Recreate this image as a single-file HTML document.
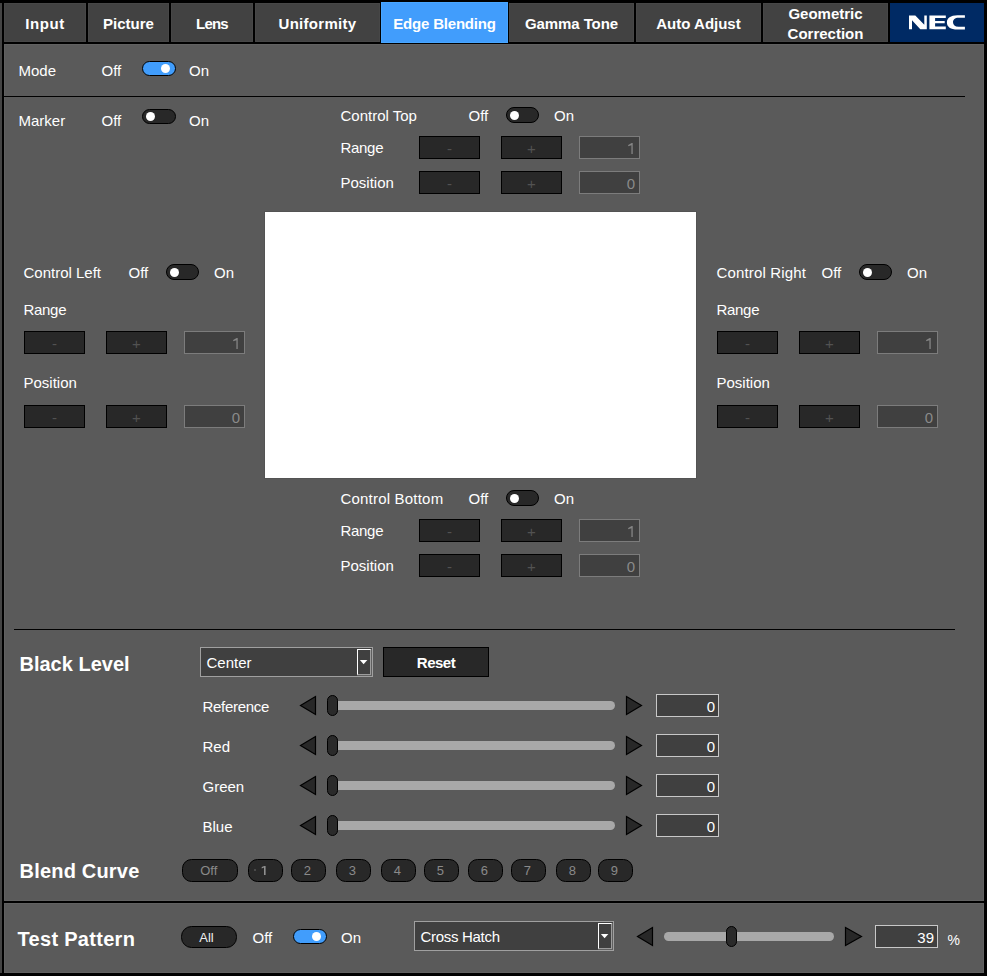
<!DOCTYPE html><html><head><meta charset="utf-8"><style>
html,body{margin:0;padding:0;width:987px;height:976px;overflow:hidden;background:#000}
body{position:relative;font-family:"Liberation Sans",sans-serif}
.t{position:absolute;white-space:nowrap;line-height:20px;font-family:"Liberation Sans",sans-serif}
</style></head><body>
<div style="position:absolute;left:0px;top:3px;width:2px;height:970px;background:#444"></div>
<div style="position:absolute;left:4px;top:3px;width:82px;height:39px;box-sizing:border-box;background:#424242;border:1px solid #474747"></div>
<div class="t" style="left:4px;top:14px;width:82px;text-align:center;font-size:15px;font-weight:700;color:#fff;letter-spacing:0.6px">Input</div>
<div style="position:absolute;left:88px;top:3px;width:81px;height:39px;box-sizing:border-box;background:#424242;border:1px solid #474747"></div>
<div class="t" style="left:88px;top:14px;width:81px;text-align:center;font-size:15px;font-weight:700;color:#fff;letter-spacing:0px">Picture</div>
<div style="position:absolute;left:171px;top:3px;width:82px;height:39px;box-sizing:border-box;background:#424242;border:1px solid #474747"></div>
<div class="t" style="left:171px;top:14px;width:82px;text-align:center;font-size:15px;font-weight:700;color:#fff;letter-spacing:-0.8px">Lens</div>
<div style="position:absolute;left:255px;top:3px;width:125px;height:39px;box-sizing:border-box;background:#424242;border:1px solid #474747"></div>
<div class="t" style="left:255px;top:14px;width:125px;text-align:center;font-size:15px;font-weight:700;color:#fff;letter-spacing:0.3px">Uniformity</div>
<div style="position:absolute;left:509px;top:3px;width:125px;height:39px;box-sizing:border-box;background:#424242;border:1px solid #474747"></div>
<div class="t" style="left:509px;top:14px;width:125px;text-align:center;font-size:15px;font-weight:700;color:#fff;letter-spacing:-0.1px">Gamma Tone</div>
<div style="position:absolute;left:636px;top:3px;width:125px;height:39px;box-sizing:border-box;background:#424242;border:1px solid #474747"></div>
<div class="t" style="left:636px;top:14px;width:125px;text-align:center;font-size:15px;font-weight:700;color:#fff;letter-spacing:0px">Auto Adjust</div>
<div style="position:absolute;left:763px;top:3px;width:125px;height:39px;box-sizing:border-box;background:#424242;border:1px solid #474747"></div>
<div style="position:absolute;left:381px;top:2px;width:127px;height:41px;box-sizing:border-box;background:#419dfc;border:1px solid #48a6ff"></div>
<div class="t" style="left:381px;top:14px;width:127px;text-align:center;font-size:15px;font-weight:700;color:#fff;letter-spacing:-0.2px">Edge Blending</div>
<div class="t" style="left:763px;top:4px;width:125px;text-align:center;font-size:15px;font-weight:700;color:#fff;">Geometric</div>
<div class="t" style="left:763px;top:24px;width:125px;text-align:center;font-size:15px;font-weight:700;color:#fff;">Correction</div>
<div style="position:absolute;left:890px;top:3px;width:94px;height:39px;background:#002a64"></div>
<svg style="position:absolute;left:0;top:0" width="987" height="976" viewBox="0 0 987 976">
<g fill="#fff">
<path d="M909 15.4 H915.3 L924.3 24.8 V15.4 H926.8 V29.3 H920.3 L912 20.3 V29.3 H909 Z"/>
<path d="M929.4 15.4 H945.8 V18 H935.1 V21.1 H944.7 V23.3 H935.1 V26.5 H945.8 V29.3 H929.4 Z"/>
<path d="M964.9 15.3 V17.7 H958.5 C955 17.7 953 19.6 953 22.2 C953 24.9 955 26.7 958.5 26.7 H964.9 V29.5 H957.5 C950.5 29.5 946.9 26.6 946.9 22.4 C946.9 18.2 950.5 15.3 957.5 15.3 Z"/>
</g></svg>
<div style="position:absolute;left:4px;top:44px;width:980px;height:857px;box-sizing:border-box;background:#5a5a5a;border:1px solid #616161"></div>
<div style="position:absolute;left:4px;top:903px;width:980px;height:70px;box-sizing:border-box;background:#5a5a5a;border:1px solid #616161"></div>
<div style="position:absolute;left:4px;top:96px;width:961px;height:1px;background:#000"></div>
<div style="position:absolute;left:14px;top:629px;width:941px;height:1px;background:#000"></div>
<div class="t" style="left:18.5px;top:61px;font-size:15px;font-weight:400;color:#fff;">Mode</div>
<div class="t" style="left:101.5px;top:61px;font-size:15px;font-weight:400;color:#fff;">Off</div>
<div style="position:absolute;left:142px;top:61px;width:32px;height:13px;border:1px solid #000;border-radius:7.5px;background:#419dfc"></div>
<div style="position:absolute;left:160.9px;top:63.900000000000006px;width:9px;height:9px;border-radius:50%;background:#fff"></div>
<div class="t" style="left:189.0px;top:61px;font-size:15px;font-weight:400;color:#fff;">On</div>
<div class="t" style="left:18.5px;top:111px;font-size:15px;font-weight:400;color:#fff;">Marker</div>
<div class="t" style="left:101.5px;top:111px;font-size:15px;font-weight:400;color:#fff;">Off</div>
<div style="position:absolute;left:142px;top:109px;width:32px;height:13px;border:1px solid #000;border-radius:7.5px;background:#282828"></div>
<div style="position:absolute;left:146.0px;top:111.9px;width:9px;height:9px;border-radius:50%;background:#fff"></div>
<div class="t" style="left:189.0px;top:111px;font-size:15px;font-weight:400;color:#fff;">On</div>
<div class="t" style="left:340.5px;top:106px;font-size:15px;font-weight:400;color:#fff;">Control Top</div>
<div class="t" style="left:468.5px;top:106px;font-size:15px;font-weight:400;color:#fff;">Off</div>
<div style="position:absolute;left:506px;top:107px;width:31px;height:14px;border:1px solid #000;border-radius:8.0px;background:#282828"></div>
<div style="position:absolute;left:510.0px;top:110.8px;width:9px;height:9px;border-radius:50%;background:#fff"></div>
<div class="t" style="left:554.0px;top:106px;font-size:15px;font-weight:400;color:#fff;">On</div>
<div class="t" style="left:340.5px;top:138px;font-size:15px;font-weight:400;color:#fff;letter-spacing:-0.3px">Range</div>
<div style="position:absolute;left:419px;top:136px;width:61px;height:23px;box-sizing:border-box;border:1px solid #000;background:#282828"></div>
<div class="t" style="left:419px;top:139px;width:61px;text-align:center;font-size:15px;font-weight:400;color:#525252;">-</div>
<div style="position:absolute;left:501px;top:136px;width:61px;height:23px;box-sizing:border-box;border:1px solid #000;background:#282828"></div>
<div class="t" style="left:501px;top:139px;width:61px;text-align:center;font-size:15px;font-weight:400;color:#525252;">+</div>
<div style="position:absolute;left:579px;top:136px;width:61px;height:23px;box-sizing:border-box;border:1px solid #7c7c7c;background:#404040"></div>
<svg style="position:absolute;left:0;top:0;overflow:visible" width="1" height="1"><path d="M632.6999999999999 143 V154 H631.4 V145.16 L628.1999999999999 146.3 V144.9 L631.6999999999999 143 Z" fill="#858585"/></svg>
<div class="t" style="left:340.5px;top:173px;font-size:15px;font-weight:400;color:#fff;">Position</div>
<div style="position:absolute;left:419px;top:171px;width:61px;height:23px;box-sizing:border-box;border:1px solid #000;background:#282828"></div>
<div class="t" style="left:419px;top:174px;width:61px;text-align:center;font-size:15px;font-weight:400;color:#525252;">-</div>
<div style="position:absolute;left:501px;top:171px;width:61px;height:23px;box-sizing:border-box;border:1px solid #000;background:#282828"></div>
<div class="t" style="left:501px;top:174px;width:61px;text-align:center;font-size:15px;font-weight:400;color:#525252;">+</div>
<div style="position:absolute;left:579px;top:171px;width:61px;height:23px;box-sizing:border-box;border:1px solid #7c7c7c;background:#404040"></div>
<div class="t" style="left:435px;top:174px;width:200px;text-align:right;font-size:15px;font-weight:400;color:#8a8a8a">0</div>
<div class="t" style="left:23.5px;top:263px;font-size:15px;font-weight:400;color:#fff;">Control Left</div>
<div class="t" style="left:128.5px;top:263px;font-size:15px;font-weight:400;color:#fff;">Off</div>
<div style="position:absolute;left:166px;top:264px;width:31px;height:14px;border:1px solid #000;border-radius:8.0px;background:#282828"></div>
<div style="position:absolute;left:170.0px;top:267.8px;width:9px;height:9px;border-radius:50%;background:#fff"></div>
<div class="t" style="left:214.0px;top:263px;font-size:15px;font-weight:400;color:#fff;">On</div>
<div class="t" style="left:23.5px;top:300px;font-size:15px;font-weight:400;color:#fff;letter-spacing:-0.3px">Range</div>
<div style="position:absolute;left:24px;top:331px;width:61px;height:23px;box-sizing:border-box;border:1px solid #000;background:#282828"></div>
<div class="t" style="left:24px;top:334px;width:61px;text-align:center;font-size:15px;font-weight:400;color:#525252;">-</div>
<div style="position:absolute;left:106px;top:331px;width:61px;height:23px;box-sizing:border-box;border:1px solid #000;background:#282828"></div>
<div class="t" style="left:106px;top:334px;width:61px;text-align:center;font-size:15px;font-weight:400;color:#525252;">+</div>
<div style="position:absolute;left:184px;top:331px;width:61px;height:23px;box-sizing:border-box;border:1px solid #7c7c7c;background:#404040"></div>
<svg style="position:absolute;left:0;top:0;overflow:visible" width="1" height="1"><path d="M237.70000000000002 338 V349 H236.4 V340.16 L233.20000000000002 341.29999999999995 V339.9 L236.70000000000002 338 Z" fill="#858585"/></svg>
<div class="t" style="left:23.5px;top:373px;font-size:15px;font-weight:400;color:#fff;">Position</div>
<div style="position:absolute;left:24px;top:405px;width:61px;height:23px;box-sizing:border-box;border:1px solid #000;background:#282828"></div>
<div class="t" style="left:24px;top:408px;width:61px;text-align:center;font-size:15px;font-weight:400;color:#525252;">-</div>
<div style="position:absolute;left:106px;top:405px;width:61px;height:23px;box-sizing:border-box;border:1px solid #000;background:#282828"></div>
<div class="t" style="left:106px;top:408px;width:61px;text-align:center;font-size:15px;font-weight:400;color:#525252;">+</div>
<div style="position:absolute;left:184px;top:405px;width:61px;height:23px;box-sizing:border-box;border:1px solid #7c7c7c;background:#404040"></div>
<div class="t" style="left:40px;top:408px;width:200px;text-align:right;font-size:15px;font-weight:400;color:#8a8a8a">0</div>
<div class="t" style="left:716.5px;top:263px;font-size:15px;font-weight:400;color:#fff;letter-spacing:0.15px">Control Right</div>
<div class="t" style="left:821.5px;top:263px;font-size:15px;font-weight:400;color:#fff;">Off</div>
<div style="position:absolute;left:859px;top:264px;width:31px;height:14px;border:1px solid #000;border-radius:8.0px;background:#282828"></div>
<div style="position:absolute;left:863.0px;top:267.8px;width:9px;height:9px;border-radius:50%;background:#fff"></div>
<div class="t" style="left:907.0px;top:263px;font-size:15px;font-weight:400;color:#fff;">On</div>
<div class="t" style="left:716.5px;top:300px;font-size:15px;font-weight:400;color:#fff;letter-spacing:-0.3px">Range</div>
<div style="position:absolute;left:717px;top:331px;width:61px;height:23px;box-sizing:border-box;border:1px solid #000;background:#282828"></div>
<div class="t" style="left:717px;top:334px;width:61px;text-align:center;font-size:15px;font-weight:400;color:#525252;">-</div>
<div style="position:absolute;left:799px;top:331px;width:61px;height:23px;box-sizing:border-box;border:1px solid #000;background:#282828"></div>
<div class="t" style="left:799px;top:334px;width:61px;text-align:center;font-size:15px;font-weight:400;color:#525252;">+</div>
<div style="position:absolute;left:877px;top:331px;width:61px;height:23px;box-sizing:border-box;border:1px solid #7c7c7c;background:#404040"></div>
<svg style="position:absolute;left:0;top:0;overflow:visible" width="1" height="1"><path d="M930.6999999999999 338 V349 H929.4 V340.16 L926.1999999999999 341.29999999999995 V339.9 L929.6999999999999 338 Z" fill="#858585"/></svg>
<div class="t" style="left:716.5px;top:373px;font-size:15px;font-weight:400;color:#fff;">Position</div>
<div style="position:absolute;left:717px;top:405px;width:61px;height:23px;box-sizing:border-box;border:1px solid #000;background:#282828"></div>
<div class="t" style="left:717px;top:408px;width:61px;text-align:center;font-size:15px;font-weight:400;color:#525252;">-</div>
<div style="position:absolute;left:799px;top:405px;width:61px;height:23px;box-sizing:border-box;border:1px solid #000;background:#282828"></div>
<div class="t" style="left:799px;top:408px;width:61px;text-align:center;font-size:15px;font-weight:400;color:#525252;">+</div>
<div style="position:absolute;left:877px;top:405px;width:61px;height:23px;box-sizing:border-box;border:1px solid #7c7c7c;background:#404040"></div>
<div class="t" style="left:733px;top:408px;width:200px;text-align:right;font-size:15px;font-weight:400;color:#8a8a8a">0</div>
<div style="position:absolute;left:264px;top:211px;width:433px;height:268px;background:#535353"></div>
<div style="position:absolute;left:265px;top:212px;width:431px;height:266px;background:#fff"></div>
<div class="t" style="left:340.5px;top:489px;font-size:15px;font-weight:400;color:#fff;letter-spacing:0.2px">Control Bottom</div>
<div class="t" style="left:468.5px;top:489px;font-size:15px;font-weight:400;color:#fff;">Off</div>
<div style="position:absolute;left:506px;top:490px;width:31px;height:14px;border:1px solid #000;border-radius:8.0px;background:#282828"></div>
<div style="position:absolute;left:510.0px;top:493.8px;width:9px;height:9px;border-radius:50%;background:#fff"></div>
<div class="t" style="left:554.0px;top:489px;font-size:15px;font-weight:400;color:#fff;">On</div>
<div class="t" style="left:340.5px;top:521px;font-size:15px;font-weight:400;color:#fff;letter-spacing:-0.3px">Range</div>
<div style="position:absolute;left:419px;top:519px;width:61px;height:23px;box-sizing:border-box;border:1px solid #000;background:#282828"></div>
<div class="t" style="left:419px;top:522px;width:61px;text-align:center;font-size:15px;font-weight:400;color:#525252;">-</div>
<div style="position:absolute;left:501px;top:519px;width:61px;height:23px;box-sizing:border-box;border:1px solid #000;background:#282828"></div>
<div class="t" style="left:501px;top:522px;width:61px;text-align:center;font-size:15px;font-weight:400;color:#525252;">+</div>
<div style="position:absolute;left:579px;top:519px;width:61px;height:23px;box-sizing:border-box;border:1px solid #7c7c7c;background:#404040"></div>
<svg style="position:absolute;left:0;top:0;overflow:visible" width="1" height="1"><path d="M632.6999999999999 526 V537 H631.4 V528.16 L628.1999999999999 529.3 V527.9 L631.6999999999999 526 Z" fill="#858585"/></svg>
<div class="t" style="left:340.5px;top:556px;font-size:15px;font-weight:400;color:#fff;">Position</div>
<div style="position:absolute;left:419px;top:554px;width:61px;height:23px;box-sizing:border-box;border:1px solid #000;background:#282828"></div>
<div class="t" style="left:419px;top:557px;width:61px;text-align:center;font-size:15px;font-weight:400;color:#525252;">-</div>
<div style="position:absolute;left:501px;top:554px;width:61px;height:23px;box-sizing:border-box;border:1px solid #000;background:#282828"></div>
<div class="t" style="left:501px;top:557px;width:61px;text-align:center;font-size:15px;font-weight:400;color:#525252;">+</div>
<div style="position:absolute;left:579px;top:554px;width:61px;height:23px;box-sizing:border-box;border:1px solid #7c7c7c;background:#404040"></div>
<div class="t" style="left:435px;top:557px;width:200px;text-align:right;font-size:15px;font-weight:400;color:#8a8a8a">0</div>
<div class="t" style="left:19.5px;top:654px;font-size:20px;font-weight:700;color:#fff;">Black Level</div>
<div style="position:absolute;left:200px;top:647px;width:173px;height:30px;box-sizing:border-box;background:#404040;border:1px solid #a0a0a0"></div>
<div class="t" style="left:206.5px;top:653px;font-size:15px;font-weight:400;color:#fff;">Center</div>
<div style="position:absolute;left:357px;top:649px;width:15px;height:27px;background:#606060"></div>
<div style="position:absolute;left:357px;top:649px;width:14px;height:26px;box-sizing:border-box;background:#404040;border-style:solid;border-width:1px;border-color:#fff #9c9c9c #9c9c9c #fff"></div>
<svg style="position:absolute;left:0;top:0;overflow:visible" width="1" height="1"><path d="M359.85 660 H367.35 L363.6 664.2 Z" fill="#fff"/></svg>
<div style="position:absolute;left:383px;top:647px;width:106px;height:30px;box-sizing:border-box;background:#282828;border:1px solid #000"></div>
<div class="t" style="left:383px;top:653px;width:106px;text-align:center;font-size:15px;font-weight:700;color:#fff;letter-spacing:-0.5px">Reset</div>
<div class="t" style="left:202.5px;top:697px;font-size:15px;font-weight:400;color:#fff;letter-spacing:-0.3px">Reference</div>
<div style="position:absolute;left:330px;top:701px;width:285px;height:9px;border-radius:4.5px;background:#a8a8a8"></div>
<svg style="position:absolute;left:0;top:0;overflow:visible" width="1" height="1"><path d="M300.5 705.5 L315.5 696.5 V714.5 Z" fill="#282828" stroke="#000" stroke-width="1.2" stroke-linejoin="miter"/><path d="M641.5 705.5 L626.5 696.5 V714.5 Z" fill="#282828" stroke="#000" stroke-width="1.2"/></svg>
<div style="position:absolute;left:327px;top:695px;width:9px;height:19px;border:1px solid #000;border-radius:6px;background:#2a2a2a"></div>
<div style="position:absolute;left:656px;top:694px;width:63px;height:23px;box-sizing:border-box;background:#404040;border:1px solid #c8c8c8"></div>
<div class="t" style="left:515px;top:697px;width:200px;text-align:right;font-size:15px;font-weight:400;color:#fff">0</div>
<div class="t" style="left:202.5px;top:737px;font-size:15px;font-weight:400;color:#fff;">Red</div>
<div style="position:absolute;left:330px;top:741px;width:285px;height:9px;border-radius:4.5px;background:#a8a8a8"></div>
<svg style="position:absolute;left:0;top:0;overflow:visible" width="1" height="1"><path d="M300.5 745.5 L315.5 736.5 V754.5 Z" fill="#282828" stroke="#000" stroke-width="1.2" stroke-linejoin="miter"/><path d="M641.5 745.5 L626.5 736.5 V754.5 Z" fill="#282828" stroke="#000" stroke-width="1.2"/></svg>
<div style="position:absolute;left:327px;top:735px;width:9px;height:19px;border:1px solid #000;border-radius:6px;background:#2a2a2a"></div>
<div style="position:absolute;left:656px;top:734px;width:63px;height:23px;box-sizing:border-box;background:#404040;border:1px solid #c8c8c8"></div>
<div class="t" style="left:515px;top:737px;width:200px;text-align:right;font-size:15px;font-weight:400;color:#fff">0</div>
<div class="t" style="left:202.5px;top:777px;font-size:15px;font-weight:400;color:#fff;">Green</div>
<div style="position:absolute;left:330px;top:781px;width:285px;height:9px;border-radius:4.5px;background:#a8a8a8"></div>
<svg style="position:absolute;left:0;top:0;overflow:visible" width="1" height="1"><path d="M300.5 785.5 L315.5 776.5 V794.5 Z" fill="#282828" stroke="#000" stroke-width="1.2" stroke-linejoin="miter"/><path d="M641.5 785.5 L626.5 776.5 V794.5 Z" fill="#282828" stroke="#000" stroke-width="1.2"/></svg>
<div style="position:absolute;left:327px;top:775px;width:9px;height:19px;border:1px solid #000;border-radius:6px;background:#2a2a2a"></div>
<div style="position:absolute;left:656px;top:774px;width:63px;height:23px;box-sizing:border-box;background:#404040;border:1px solid #c8c8c8"></div>
<div class="t" style="left:515px;top:777px;width:200px;text-align:right;font-size:15px;font-weight:400;color:#fff">0</div>
<div class="t" style="left:202.5px;top:817px;font-size:15px;font-weight:400;color:#fff;">Blue</div>
<div style="position:absolute;left:330px;top:821px;width:285px;height:9px;border-radius:4.5px;background:#a8a8a8"></div>
<svg style="position:absolute;left:0;top:0;overflow:visible" width="1" height="1"><path d="M300.5 825.5 L315.5 816.5 V834.5 Z" fill="#282828" stroke="#000" stroke-width="1.2" stroke-linejoin="miter"/><path d="M641.5 825.5 L626.5 816.5 V834.5 Z" fill="#282828" stroke="#000" stroke-width="1.2"/></svg>
<div style="position:absolute;left:327px;top:815px;width:9px;height:19px;border:1px solid #000;border-radius:6px;background:#2a2a2a"></div>
<div style="position:absolute;left:656px;top:814px;width:63px;height:23px;box-sizing:border-box;background:#404040;border:1px solid #c8c8c8"></div>
<div class="t" style="left:515px;top:817px;width:200px;text-align:right;font-size:15px;font-weight:400;color:#fff">0</div>
<div class="t" style="left:19.5px;top:861px;font-size:20px;font-weight:700;color:#fff;letter-spacing:0.2px">Blend Curve</div>
<div style="position:absolute;left:182px;top:859px;width:56px;height:23px;box-sizing:border-box;background:#282828;border:1px solid #000;border-radius:9.5px"></div>
<div class="t" style="left:180.3px;top:861px;width:57.0px;text-align:center;font-size:13px;font-weight:400;color:#8a8a8a;">Off</div>
<div style="position:absolute;left:248px;top:859px;width:35px;height:23px;box-sizing:border-box;background:#282828;border:1px solid #000;border-radius:9.5px"></div>
<svg style="position:absolute;left:0;top:0;overflow:visible" width="1" height="1"><path d="M265.6 866 V875 H264 V867.44 L261.7 868.5 V867.1 L264.3 866 Z" fill="#909090"/></svg>
<div style="position:absolute;left:254px;top:869px;width:2px;height:2px;background:#555;border-radius:1px"></div>
<div style="position:absolute;left:291px;top:859px;width:35px;height:23px;box-sizing:border-box;background:#282828;border:1px solid #000;border-radius:9.5px"></div>
<div class="t" style="left:289.3px;top:861px;width:36.0px;text-align:center;font-size:13px;font-weight:400;color:#8a8a8a;">2</div>
<div style="position:absolute;left:336px;top:859px;width:35px;height:23px;box-sizing:border-box;background:#282828;border:1px solid #000;border-radius:9.5px"></div>
<div class="t" style="left:334.3px;top:861px;width:36.0px;text-align:center;font-size:13px;font-weight:400;color:#8a8a8a;">3</div>
<div style="position:absolute;left:381px;top:859px;width:35px;height:23px;box-sizing:border-box;background:#282828;border:1px solid #000;border-radius:9.5px"></div>
<div class="t" style="left:379.3px;top:861px;width:36.0px;text-align:center;font-size:13px;font-weight:400;color:#8a8a8a;">4</div>
<div style="position:absolute;left:424px;top:859px;width:35px;height:23px;box-sizing:border-box;background:#282828;border:1px solid #000;border-radius:9.5px"></div>
<div class="t" style="left:422.3px;top:861px;width:36.0px;text-align:center;font-size:13px;font-weight:400;color:#8a8a8a;">5</div>
<div style="position:absolute;left:468px;top:859px;width:35px;height:23px;box-sizing:border-box;background:#282828;border:1px solid #000;border-radius:9.5px"></div>
<div class="t" style="left:466.3px;top:861px;width:36.0px;text-align:center;font-size:13px;font-weight:400;color:#8a8a8a;">6</div>
<div style="position:absolute;left:511px;top:859px;width:35px;height:23px;box-sizing:border-box;background:#282828;border:1px solid #000;border-radius:9.5px"></div>
<div class="t" style="left:509.3px;top:861px;width:35.99999999999994px;text-align:center;font-size:13px;font-weight:400;color:#8a8a8a;">7</div>
<div style="position:absolute;left:556px;top:859px;width:35px;height:23px;box-sizing:border-box;background:#282828;border:1px solid #000;border-radius:9.5px"></div>
<div class="t" style="left:554.3px;top:861px;width:36.0px;text-align:center;font-size:13px;font-weight:400;color:#8a8a8a;">8</div>
<div style="position:absolute;left:598px;top:859px;width:35px;height:23px;box-sizing:border-box;background:#282828;border:1px solid #000;border-radius:9.5px"></div>
<div class="t" style="left:596.3px;top:861px;width:36.0px;text-align:center;font-size:13px;font-weight:400;color:#8a8a8a;">9</div>
<div class="t" style="left:17.5px;top:929px;font-size:20px;font-weight:700;color:#fff;letter-spacing:0.3px">Test Pattern</div>
<div style="position:absolute;left:181px;top:926px;width:56px;height:22px;box-sizing:border-box;background:#282828;border:1px solid #000;border-radius:10.5px"></div>
<div class="t" style="left:178px;top:928px;width:57px;text-align:center;font-size:13px;font-weight:400;color:#eee;">All</div>
<div class="t" style="left:252.5px;top:928px;font-size:15px;font-weight:400;color:#fff;">Off</div>
<div style="position:absolute;left:293px;top:929px;width:32px;height:13px;border:1px solid #000;border-radius:7.5px;background:#419dfc"></div>
<div style="position:absolute;left:311.9px;top:931.9px;width:9px;height:9px;border-radius:50%;background:#fff"></div>
<div class="t" style="left:341.0px;top:928px;font-size:15px;font-weight:400;color:#fff;">On</div>
<div style="position:absolute;left:414px;top:921px;width:200px;height:30px;box-sizing:border-box;background:#404040;border:1px solid #a0a0a0"></div>
<div class="t" style="left:420.5px;top:927px;font-size:15px;font-weight:400;color:#fff;letter-spacing:-0.3px">Cross Hatch</div>
<div style="position:absolute;left:598px;top:923px;width:15px;height:27px;background:#606060"></div>
<div style="position:absolute;left:598px;top:923px;width:14px;height:26px;box-sizing:border-box;background:#404040;border-style:solid;border-width:1px;border-color:#fff #9c9c9c #9c9c9c #fff"></div>
<svg style="position:absolute;left:0;top:0;overflow:visible" width="1" height="1"><path d="M600.85 934 H608.35 L604.6 938.2 Z" fill="#fff"/></svg>
<div style="position:absolute;left:664px;top:932px;width:170px;height:9px;border-radius:4.5px;background:#a8a8a8"></div>
<svg style="position:absolute;left:0;top:0;overflow:visible" width="1" height="1"><path d="M637.5 936.5 L652.5 927.5 V945.5 Z" fill="#282828" stroke="#000" stroke-width="1.2" stroke-linejoin="miter"/><path d="M861.5 936.5 L845.5 927.5 V945.5 Z" fill="#282828" stroke="#000" stroke-width="1.2"/></svg>
<div style="position:absolute;left:726px;top:926px;width:9px;height:19px;border:1px solid #000;border-radius:6px;background:#2a2a2a"></div>
<div style="position:absolute;left:875px;top:925px;width:63px;height:23px;box-sizing:border-box;background:#404040;border:1px solid #c8c8c8"></div>
<div class="t" style="left:734px;top:928px;width:200px;text-align:right;font-size:15px;font-weight:400;color:#fff">39</div>
<div class="t" style="left:947.5px;top:930px;font-size:14px;font-weight:400;color:#fff;">%</div>
</body></html>
